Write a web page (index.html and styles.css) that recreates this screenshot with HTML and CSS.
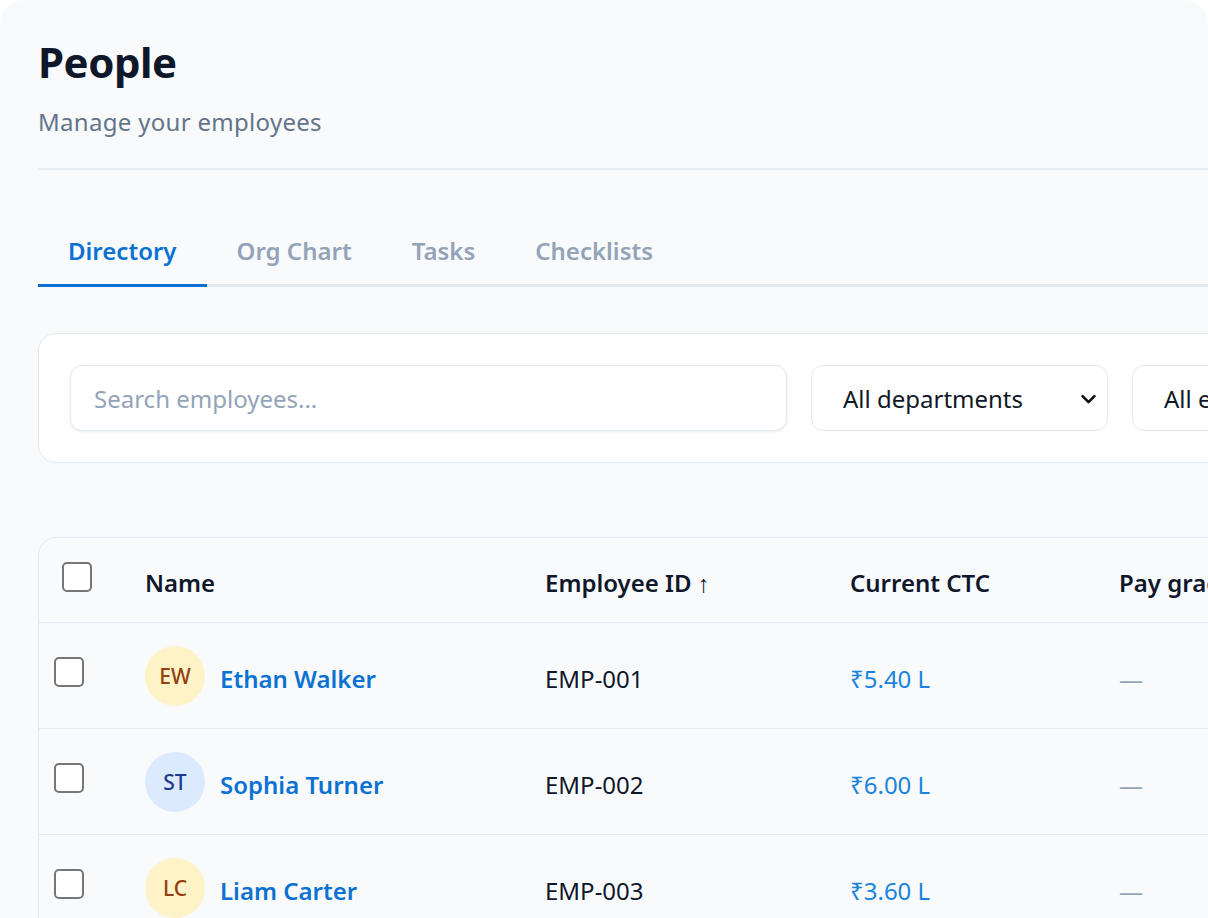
FILE: index.html
```html
<!DOCTYPE html>
<html lang="en">
<head>
<meta charset="utf-8">
<title>People</title>
<link rel="stylesheet" href="styles.css">
</head>
<body>
<div class="page">
  <header class="page-header">
    <h1 class="title">People</h1>
    <p class="subtitle">Manage your employees</p>
  </header>

  <nav class="tabs">
    <a class="tab active">Directory</a>
    <a class="tab">Org Chart</a>
    <a class="tab">Tasks</a>
    <a class="tab">Checklists</a>
  </nav>

  <section class="filters">
    <div class="search">Search employees...</div>
    <div class="select">
      <span>All departments</span>
      <svg class="chev" viewBox="0 0 16 16" width="16" height="16"><path d="M3 6l5 5 5-5" fill="none" stroke="#111" stroke-width="2.2" stroke-linecap="round" stroke-linejoin="round"/></svg>
    </div>
    <div class="select">
      <span>All employees</span>
      <svg class="chev" viewBox="0 0 16 16" width="16" height="16"><path d="M3 6l5 5 5-5" fill="none" stroke="#111" stroke-width="2.2" stroke-linecap="round" stroke-linejoin="round"/></svg>
    </div>
  </section>

  <section class="table-card">
    <table class="grid">
      <colgroup>
        <col class="c-check"><col class="c-name"><col class="c-id"><col class="c-ctc"><col class="c-grade">
      </colgroup>
      <thead>
        <tr>
          <th class="th-check"><span class="box"></span></th>
          <th>Name</th>
          <th>Employee ID <span class="sort">↑</span></th>
          <th>Current CTC</th>
          <th>Pay grade</th>
        </tr>
      </thead>
      <tbody>
        <tr>
          <td class="td-check"><span class="box"></span></td>
          <td class="td-person"><div class="person"><span class="avatar amber">EW</span><a class="name">Ethan Walker</a></div></td>
          <td>EMP-001</td>
          <td class="ctc">₹5.40 L</td>
          <td class="dash">—</td>
        </tr>
        <tr>
          <td class="td-check"><span class="box"></span></td>
          <td class="td-person"><div class="person"><span class="avatar blue">ST</span><a class="name">Sophia Turner</a></div></td>
          <td>EMP-002</td>
          <td class="ctc">₹6.00 L</td>
          <td class="dash">—</td>
        </tr>
        <tr>
          <td class="td-check"><span class="box"></span></td>
          <td class="td-person"><div class="person"><span class="avatar amber">LC</span><a class="name">Liam Carter</a></div></td>
          <td>EMP-003</td>
          <td class="ctc">₹3.60 L</td>
          <td class="dash">—</td>
        </tr>
      </tbody>
    </table>
  </section>
</div>
</body>
</html>
```

FILE: styles.css
```css
html, body {
  margin: 0;
  padding: 0;
  background: #ffffff;
  overflow: hidden;
}
body {
  font-family: "Noto Sans", "Open Sans", sans-serif;
  color: #0f172a;
}
.page {
  width: 1208px;
  height: 918px;
  box-sizing: border-box;
  background: #f8fafc;
  border-radius: 24px 24px 0 0;
  padding: 35px 0 0 38px;
  overflow: hidden;
}
.page-header {
  border-bottom: 2px solid #e8edf3;
  padding-bottom: 28px;
  width: 1400px;
}
.title {
  margin: 0;
  font-size: 42px;
  line-height: 54px;
  font-weight: 700;
  color: #0f172a;
  letter-spacing: -0.5px;
}
.subtitle {
  margin: 15px 0 0 0;
  font-size: 24px;
  line-height: 36px;
  color: #64748b;
  letter-spacing: 0.3px;
}
.tabs {
  display: flex;
  margin-top: 48px;
  border-bottom: 3px solid #e2e8f0;
  width: 1400px;
}
.tab {
  padding: 15px 30px 15px;
  font-size: 24px;
  line-height: 36px;
  font-weight: 600;
  color: #94a3b8;
  margin-bottom: -3px;
  border-bottom: 3px solid transparent;
}
.tab.active {
  color: #0b72d4;
  border-bottom-color: #0b72d4;
}
.filters {
  margin-top: 46px;
  width: 1400px;
  box-sizing: border-box;
  background: #ffffff;
  border: 1px solid #e2e8f0;
  border-radius: 18px;
  padding: 31px;
  display: flex;
  gap: 24px;
}
.search, .select {
  flex: none;
  height: 66px;
  box-sizing: border-box;
  border: 1.5px solid #e2e8f0;
  border-radius: 12px;
  background: #fff;
  display: flex;
  align-items: center;
  font-size: 24px;
}
.search {
  width: 717px;
  padding-left: 23px;
  color: #94a3b8;
  box-shadow: 0 1px 3px rgba(15, 23, 42, 0.08);
}
.select {
  width: 297px;
  padding: 0 9px 0 31px;
  justify-content: space-between;
  color: #111827;
}
.chev {
  width: 19px;
  height: 19px;
}
.table-card {
  margin-top: 74px;
  width: 1400px;
  border: 1px solid #e2e8f0;
  border-radius: 18px;
  overflow: hidden;
}
.grid {
  border-collapse: collapse;
  table-layout: fixed;
  width: 1400px;
}
.c-check { width: 82px; }
.c-name { width: 400px; }
.c-id { width: 305px; }
.c-ctc { width: 269px; }
th {
  height: 79px;
  text-align: left;
  font-size: 24px;
  font-weight: 600;
  color: #0f172a;
  padding: 5px 0 0 24px;
  border-bottom: 1.5px solid #e2e8f0;
  white-space: nowrap;
}
.sort { font-weight: 600; }
td {
  height: 100px;
  font-size: 24px;
  padding: 5px 0 0 24px;
  color: #0f172a;
  border-bottom: 1.5px solid #e2e8f0;
  white-space: nowrap;
}
.th-check { padding: 24px 0 0 23px; vertical-align: top; height: 60px; }
.td-check { padding: 0 0 0 15px; height: 105px; }
.td-person { padding-top: 0; }
.box {
  display: block;
  width: 30px;
  height: 30px;
  box-sizing: border-box;
  border: 2px solid #767676;
  border-radius: 5px;
  background: #fff;
}
.td-check .box { margin-top: -8px; }
.person {
  display: flex;
  align-items: center;
  gap: 15px;
}
.avatar {
  width: 60px;
  height: 60px;
  border-radius: 50%;
  display: flex;
  align-items: center;
  justify-content: center;
  font-size: 21px;
  font-weight: 500;
  flex: none;
}
.avatar.amber { background: #fef3c7; color: #92400e; }
.avatar.blue { background: #dbeafe; color: #1e3a8a; }
.name {
  color: #0b72d4;
  font-weight: 600;
  margin-top: 5px;
}
.ctc { color: #1a83dc; }
.dash { color: #94a3b8; }
```
